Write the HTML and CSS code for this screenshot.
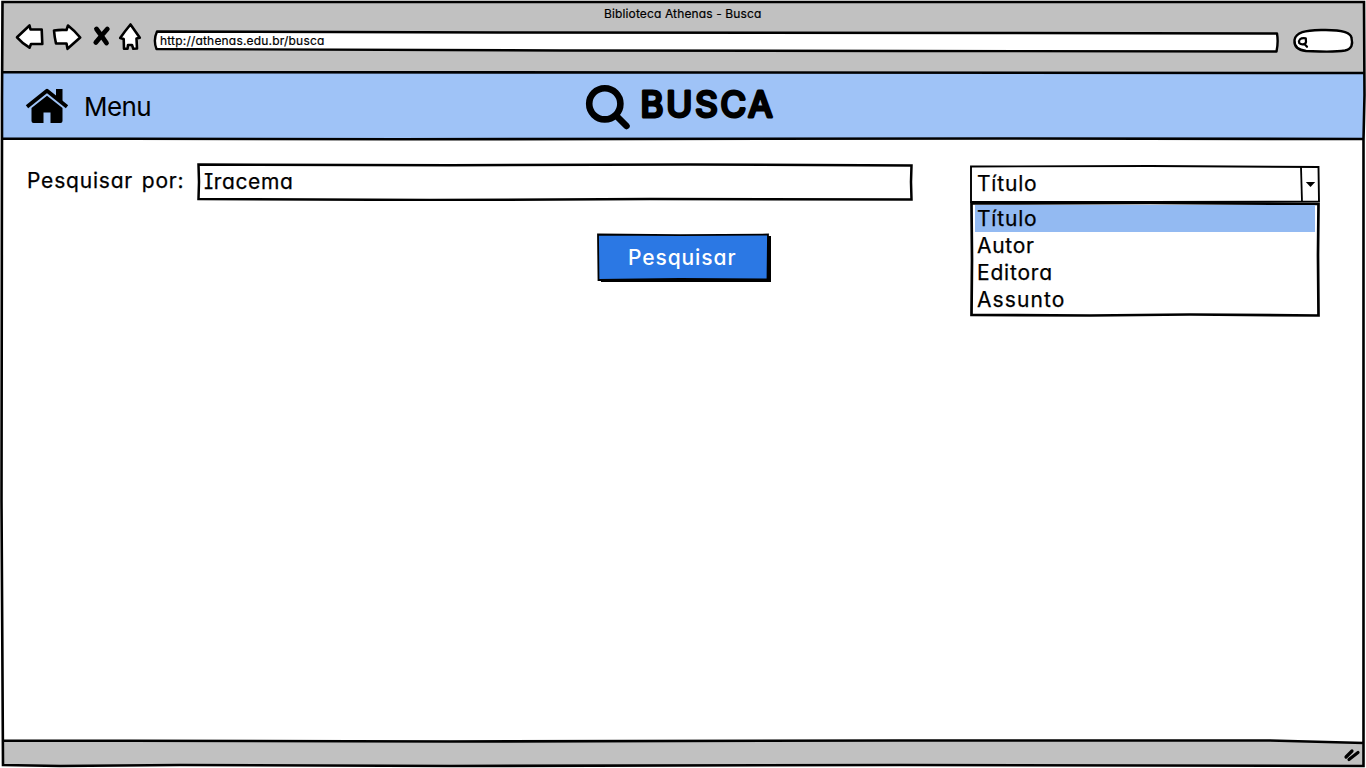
FILE: index.html
```html
<!DOCTYPE html>
<html lang="pt-BR">
<head>
<meta charset="utf-8">
<title>Biblioteca Athenas - Busca</title>
<link rel="stylesheet" href="styles.css">
</head>
<body>
<div class="window">
  <header class="chrome">
    <div class="window-title"><span class="t-title">Biblioteca Athenas - Busca</span></div>
    <div class="toolbar">
      <svg class="nav-icons" width="130" height="32" viewBox="14 20 130 32">
        <g fill="#fff" stroke="#000" stroke-width="2.600" stroke-linejoin="round">
          <path d="M17 37.300 L29.500 25.500 L30.500 29.500 L41.700 29.500 L42.300 44 L31 44 L29.500 47.700 Q22 43 17 37.300 Z"/>
          <path d="M54 30.500 Q60 29.500 66.500 30 L68 25.500 Q75 31 80.200 37.500 L67.500 48.800 L66.500 43.500 L56 43.500 Q54.500 37 54 30.500 Z"/>
          <path d="M130.500 24.500 L139.800 37.800 L136.500 38.500 L137 48.500 L133.300 48.800 L132 45 L128 45 L127.500 48.800 L124 48.800 L123.700 39 L120.200 38 Q125 31 130.500 24.500 Z"/>
        </g>
        <path d="M96.500 29 Q101 35 106.500 43 M107.300 29 Q102 35 95.800 42.500" fill="none" stroke="#000" stroke-width="4.800" stroke-linecap="round"/>
      </svg>
      <div class="address">
        <svg class="frame" width="1127" height="24" viewBox="152 29 1127 24"><path d="M157 31.500 L500 32.500 L1000 33 L1277 33.500 Q1278.500 42 1276.500 51.500 L900 51 L560 50.500 L156.500 49 Q153 40 157 31.500 Z" fill="#fff" stroke="#000" stroke-width="2.400" stroke-linejoin="round"/></svg>
        <span class="t-url">http://athenas.edu.br/busca</span>
      </div>
      <svg class="quick-search" width="62" height="28" viewBox="1292 27 62 28">
        <path d="M1306 51 C1298 50 1294 46 1294.500 40 C1296 32 1305 30.500 1321 30 C1340 29.500 1351 32 1351.500 38 C1353 44 1352 49 1345 50.500 C1333 52.500 1320 51.500 1306 51 Z" fill="#fff" stroke="#000" stroke-width="2.400"/>
        <path d="M1305.800 38.300 C1300 37.500 1298.500 40 1299.200 43 C1301 45 1305.500 45 1306 42 L1305.800 38.300 M1304.500 44 L1307 46.800" fill="none" stroke="#000" stroke-width="2.200" stroke-linecap="round"/>
      </svg>
    </div>
  </header>

  <nav class="banner">
    <a class="menu">
      <svg width="44" height="38" viewBox="25 87 44 38">
        <path d="M27 106.700 L47 90.700 L67 106.700" fill="none" stroke="#000" stroke-width="3.800" stroke-linecap="butt" stroke-linejoin="round"/>
        <path d="M56 89 H62.500 V103 L56 97.500 Z M47 95.800 L62.500 108 V121 Q62.500 123 60.500 123 H50.500 V112.500 H43.500 V123 H33.500 Q31.500 123 31.500 121 V108 Z"/>
      </svg>
      <span class="t-menu">Menu</span>
    </a>
    <h1 class="heading">
      <svg width="46" height="46" viewBox="585 84 46 46"><circle cx="604.800" cy="103.800" r="15.600" fill="none" stroke="#000" stroke-width="6.600"/><path d="M616 115.500 L626.500 126" stroke="#000" stroke-width="6.500" stroke-linecap="round"/></svg>
      <svg class="wordmark" width="140" height="46" viewBox="637 84 140 46"><text x="640.500" y="117" textLength="132" lengthAdjust="spacing">BUSCA</text></svg>
    </h1>
  </nav>

  <main class="content">
    <label class="label"><span class="t-label">Pesquisar por:</span></label>
    <div class="middle">
      <div class="field">
        <svg class="frame" width="717" height="39" viewBox="197 162 717 39"><path d="M198.500 164.500 L450 165.300 L690 164.500 L911.500 165.500 L911 182 L911.500 199.500 L650 199 L430 200 L198.500 199 L199 182 Z" fill="#fff" stroke="#000" stroke-width="2.500"/></svg>
        <span class="t-field">Iracema</span>
      </div>
      <button class="submit">
        <svg class="frame" width="175" height="50" viewBox="597 233 175 50"><path d="M601 236 H771 V282 H601 Z"/><path d="M598 234.500 L680 235.200 L768 234.500 L767.500 279.500 L680 279 L598.500 280 Z" fill="#2b78e4" stroke="#000" stroke-width="1.800"/></svg>
        <span class="t-submit">Pesquisar</span>
      </button>
    </div>
    <div class="picker">
      <svg class="frame" width="352" height="153" viewBox="969 165 352 153">
        <path d="M971 166.500 L1150 166 L1318.500 167 L1319 201.500 L1150 202 L971 202 Z" fill="#fff" stroke="#000" stroke-width="1.900"/>
        <path d="M1301 167 L1302 202" stroke="#000" stroke-width="1.800"/>
        <path d="M1305.800 182 H1315.200 L1310.500 187 Z"/>
        <path d="M971.500 203.500 L1150 203 L1318.500 204 L1318 255 L1318.500 315.500 L1190 314.500 L1090 315.500 L971.500 315 L972 260 Z" fill="#fff" stroke="#000" stroke-width="2.700"/>
      </svg>
      <div class="selected"><span class="t-opt1">Título</span></div>
      <ul class="options">
        <li class="active"><span class="t-opt1">Título</span></li>
        <li><span class="t-opt2">Autor</span></li>
        <li><span class="t-opt3">Editora</span></li>
        <li><span class="t-opt4">Assunto</span></li>
      </ul>
    </div>
  </main>

  <footer class="status"></footer>
  <svg class="outline" width="1366" height="768" viewBox="0 0 1366 768">
    <path d="M0 768 V0 H1366 V768 Z M2 2 V766 H1364 V2 Z" fill="#fff" fill-rule="evenodd"/>
    <path d="M3 740 H1363 V743 L1270 740.500 H3 Z" fill="#fff"/>
    <path d="M2.500 2 L700 2 L1364 2 L1364.500 95 L1363.500 140 L1363.500 766 L900 765 L450 766 L180 765 L60 766 L3 765 L1.500 500 L2 140 L2 100 Z M2 72 L700 72.500 L1364 73 M2 138.500 L400 139.300 L1000 138.500 L1364 139 M2 740.500 L450 741.500 L900 740.500 L1270 740.500 L1364 743" fill="none" stroke="#000" stroke-width="2.600"/>
    <path d="M1346 757 L1352 751 M1349 759.500 L1358 752.500" stroke="#000" stroke-width="3.200" stroke-linecap="round"/>
  </svg>
</div>
</body>
</html>
```
FILE: styles.css
```css
* { box-sizing: border-box; }
body { margin: 0; font-family: Inter, "Open Sans", sans-serif; font-feature-settings: "cv11" 1, "ss03" 1; color: #000; background: #fff; overflow: hidden; }
svg { display: block; flex: none; }
span { white-space: nowrap; }
.window { position: relative; width: 1366px; height: 768px; display: flex; flex-direction: column; }
.outline { position: absolute; inset: 0; pointer-events: none; }
.frame { position: absolute; left: -1px; top: -1px; z-index: 0; }

.chrome { height: 72px; background: #c1c1c1; padding-top: 6px; }
.window-title { height: 14px; line-height: 15px; padding-left: 604px; font-size: 12px; }
.toolbar { display: flex; align-items: flex-start; padding-left: 14px; }
.address { position: relative; width: 1125px; height: 22px; margin: 10px 0 0 9px; padding-left: 7px; font-size: 12px; line-height: 21px; }
.address span, .field span, .submit span { position: relative; }
.quick-search { margin: 7px 0 0 14px; }

.banner { height: 67px; background: #9fc3f7; display: flex; align-items: center; padding-left: 25px; }
.menu { display: flex; align-items: center; gap: 15px; width: 560px; font-size: 26px; line-height: 34px; }
.heading { display: flex; align-items: center; gap: 6px; margin: 3px 0 0; }
.wordmark text { font-size: 35px; font-weight: 400; stroke: #000; stroke-width: 3.200px; stroke-linejoin: round; }

.content { flex: 1; display: flex; align-items: flex-start; padding: 24px 0 0 27px; font-size: 21px; }
.label { width: 171px; padding-top: 5px; line-height: 26px; }
.middle { width: 772px; display: flex; flex-direction: column; }
.field { position: relative; width: 715px; height: 37px; padding: 6px 0 0 6px; line-height: 26px; }
.submit { position: relative; width: 173px; height: 48px; margin: 34px 0 0 400px; padding: 0 0 1px 30px; border: 0; background: none; font: inherit; font-feature-settings: inherit; color: #fff; text-align: left; line-height: 26px; font-weight: 500; }
.picker { position: relative; width: 350px; height: 151px; margin-top: 3px; }
.selected { position: relative; height: 38px; padding: 5px 0 0 7px; line-height: 26px; }
.options { position: relative; list-style: none; margin: 1px 5px 0; padding: 0; line-height: 27px; }
.options li { height: 27px; padding-left: 2px; }
.options .active { background: #93baf2; }
.label, .field, .selected, .options { -webkit-text-stroke: 0.25px #000; }

.status { height: 28px; background: #c1c1c1; }

.t-title { letter-spacing: 0.13px; -webkit-text-stroke: 0.2px #000; }
.t-url { letter-spacing: 0.19px; -webkit-text-stroke: 0.2px #000; }
.t-menu { letter-spacing: -0.6px; padding-top: 2px; }
.t-label { letter-spacing: 0.8px; word-spacing: 2px; }
.t-field { letter-spacing: 0.6px; font-feature-settings: "cv11" 1, "ss03" 1, "cv08" 1; }
.t-submit { letter-spacing: 0.9px; }
.t-opt1 { letter-spacing: 0.8px; }
.t-opt2 { letter-spacing: 0.7px; }
.t-opt3 { letter-spacing: 0.8px; }
.t-opt4 { letter-spacing: 1.1px; }
```
